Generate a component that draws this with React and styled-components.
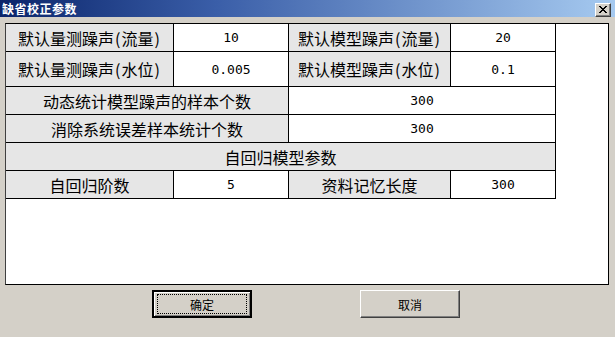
import React from "react";
import styled, { createGlobalStyle } from "styled-components";

const Global = createGlobalStyle`
  html, body { margin: 0; padding: 0; background: #d4d0c8; }
  body { font-family: "Noto Sans CJK SC", "Liberation Sans", sans-serif; }
  * { box-sizing: border-box; }
`;

const Window = styled.div`
  width: 615px;
  height: 337px;
  background: #d4d0c8;
  display: flex;
  flex-direction: column;
  overflow: hidden;
`;

const TitleBar = styled.div`
  height: 17px;
  flex: none;
  display: flex;
  align-items: center;
  justify-content: space-between;
  padding: 0 4px 0 2px;
  background: linear-gradient(to right, #0a246a 0%, #3a5ea8 35%, #a6caf0 100%);
`;

const Title = styled.span`
  color: #fff;
  font-weight: bold;
  font-size: 12px;
  line-height: 17px;
  letter-spacing: 0.5px;
`;

const CloseBtn = styled.div`
  width: 16px;
  height: 14px;
  margin-top: 2px;
  background: #d4d0c8;
  border-top: 1px solid #fff;
  border-left: 1px solid #fff;
  border-right: 1px solid #404040;
  border-bottom: 1px solid #404040;
  box-shadow: inset -1px -1px 0 #808080;
  display: flex;
  align-items: center;
  justify-content: center;
`;

const Panel = styled.div`
  margin: 6px 0 0 5px;
  width: 604px;
  height: 262px;
  flex: none;
  background: #fff;
  border-top: 1px solid #000;
  border-left: 1px solid #404040;
  border-right: 1px solid #000;
  border-bottom: 1px solid #000;
`;

const Grid = styled.div`
  display: grid;
  grid-template-columns: 167px 114px 161px 104px;
  grid-template-rows: 27px 34px 27px 27px 27px 27px;
  gap: 1px;
  width: 550px;
  padding: 0 1px 1px 0;
  background: #000;
`;

const Cell = styled.div`
  grid-column: span ${(p) => p.$span || 1};
  background: ${(p) => (p.$label ? "#e6e6e6" : "#fff")};
  display: flex;
  align-items: center;
  justify-content: center;
  color: #000;
  white-space: nowrap;
  font-family: ${(p) =>
    p.$label
      ? '"Noto Sans CJK SC", "Liberation Sans", sans-serif'
      : '"DejaVu Sans Mono", "Liberation Mono", monospace'};
  font-size: ${(p) => (p.$label ? "16px" : "13px")};
`;

const Paren = styled.span`
  padding: 0 1px;
`;

const ButtonRow = styled.div`
  display: flex;
  margin-top: 5px;
  padding-left: 152px;
  gap: 108px;
`;

const Button = styled.div`
  width: 100px;
  height: 28px;
  background: #d4d0c8;
  display: flex;
  align-items: center;
  justify-content: center;
  font-size: 12px;
  color: #000;
  border: ${(p) => (p.$default ? "2px solid #000" : "1px solid #fff")};
  border-right-color: ${(p) => (p.$default ? "#000" : "#404040")};
  border-bottom-color: ${(p) => (p.$default ? "#000" : "#404040")};
  box-shadow: ${(p) =>
    p.$default ? "inset 1px 1px 0 #fff, inset -1px -1px 0 #808080" : "inset -1px -1px 0 #808080"};
`;

const Focus = styled.span`
  width: 90px;
  height: 20px;
  border: 1px dotted #000;
  display: flex;
  align-items: center;
  justify-content: center;
`;

const Label = ({ main, sub }) => (
  <>
    {main}
    {sub && (
      <>
        <Paren>(</Paren>
        {sub}
        <Paren>)</Paren>
      </>
    )}
  </>
);

const rows = [
  [
    { t: <Label main="默认量测躁声" sub="流量" />, l: true },
    { t: "10" },
    { t: <Label main="默认模型躁声" sub="流量" />, l: true },
    { t: "20" },
  ],
  [
    { t: <Label main="默认量测躁声" sub="水位" />, l: true },
    { t: "0.005" },
    { t: <Label main="默认模型躁声" sub="水位" />, l: true },
    { t: "0.1" },
  ],
  [
    { t: "动态统计模型躁声的样本个数", l: true, s: 2 },
    { t: "300", s: 2 },
  ],
  [
    { t: "消除系统误差样本统计个数", l: true, s: 2 },
    { t: "300", s: 2 },
  ],
  [{ t: "自回归模型参数", l: true, s: 4 }],
  [
    { t: "自回归阶数", l: true },
    { t: "5" },
    { t: "资料记忆长度", l: true },
    { t: "300" },
  ],
];

export default function App() {
  return (
    <>
      <Global />
      <Window>
        <TitleBar>
          <Title>缺省校正参数</Title>
          <CloseBtn>
            <svg width="8" height="7" viewBox="0 0 8 7">
              <path d="M0 0 L7 7 M1 0 L8 7 M7 0 L0 7 M8 0 L1 7" stroke="#000" strokeWidth="1" />
            </svg>
          </CloseBtn>
        </TitleBar>
        <Panel>
          <Grid>
            {rows.flatMap((r, i) =>
              r.map((c, j) => (
                <Cell key={`${i}-${j}`} $label={c.l} $span={c.s}>
                  {c.t}
                </Cell>
              ))
            )}
          </Grid>
        </Panel>
        <ButtonRow>
          <Button $default>
            <Focus>确定</Focus>
          </Button>
          <Button>取消</Button>
        </ButtonRow>
      </Window>
    </>
  );
}
